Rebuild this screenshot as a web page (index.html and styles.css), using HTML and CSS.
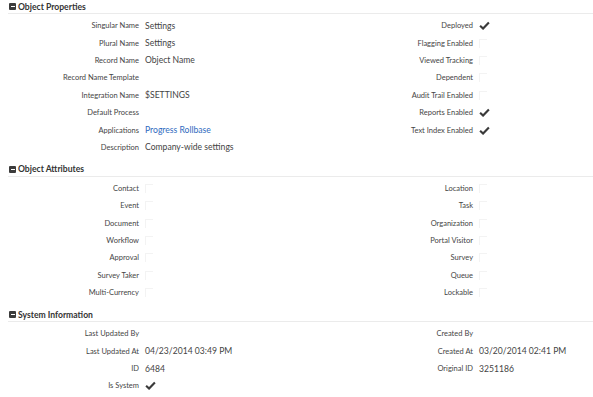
FILE: index.html
```html
<!DOCTYPE html>
<html lang="en">
<head>
    <meta charset="UTF-8">
    <meta name="viewport" content="width=device-width, initial-scale=1.0">
    <title>Object Definition</title>
    <link rel="stylesheet" href="styles.css">
</head>
<body>
    <div class="section">
        <div class="section-head"><span class="toggle"></span>Object Properties</div>
        <div class="fields">
            <div class="label">Singular Name</div><div class="value">Settings</div>
            <div class="label">Deployed</div><div class="value"><svg class="check" viewBox="0 0 10 8"><path d="M1 4.2 L3.7 6.8 L9 1.2"/></svg></div>

            <div class="label">Plural Name</div><div class="value">Settings</div>
            <div class="label">Flagging Enabled</div><div class="value"><span class="box"></span></div>

            <div class="label">Record Name</div><div class="value">Object Name</div>
            <div class="label">Viewed Tracking</div><div class="value"><span class="box"></span></div>

            <div class="label">Record Name Template</div><div class="value"></div>
            <div class="label">Dependent</div><div class="value"><span class="box"></span></div>

            <div class="label">Integration Name</div><div class="value">$SETTINGS</div>
            <div class="label">Audit Trail Enabled</div><div class="value"><span class="box"></span></div>

            <div class="label">Default Process</div><div class="value"></div>
            <div class="label">Reports Enabled</div><div class="value"><svg class="check" viewBox="0 0 10 8"><path d="M1 4.2 L3.7 6.8 L9 1.2"/></svg></div>

            <div class="label">Applications</div><div class="value"><a href="#">Progress Rollbase</a></div>
            <div class="label">Text Index Enabled</div><div class="value"><svg class="check" viewBox="0 0 10 8"><path d="M1 4.2 L3.7 6.8 L9 1.2"/></svg></div>

            <div class="label">Description</div><div class="value">Company-wide settings</div>
            <div class="label"></div><div class="value"></div>
        </div>
    </div>

    <div class="section">
        <div class="section-head"><span class="toggle"></span>Object Attributes</div>
        <div class="fields">
            <div class="label">Contact</div><div class="value"><span class="box"></span></div>
            <div class="label">Location</div><div class="value"><span class="box"></span></div>

            <div class="label">Event</div><div class="value"><span class="box"></span></div>
            <div class="label">Task</div><div class="value"><span class="box"></span></div>

            <div class="label">Document</div><div class="value"><span class="box"></span></div>
            <div class="label">Organization</div><div class="value"><span class="box"></span></div>

            <div class="label">Workflow</div><div class="value"><span class="box"></span></div>
            <div class="label">Portal Visitor</div><div class="value"><span class="box"></span></div>

            <div class="label">Approval</div><div class="value"><span class="box"></span></div>
            <div class="label">Survey</div><div class="value"><span class="box"></span></div>

            <div class="label">Survey Taker</div><div class="value"><span class="box"></span></div>
            <div class="label">Queue</div><div class="value"><span class="box"></span></div>

            <div class="label">Multi-Currency</div><div class="value"><span class="box"></span></div>
            <div class="label">Lockable</div><div class="value"><span class="box"></span></div>
        </div>
    </div>

    <div class="section">
        <div class="section-head"><span class="toggle"></span>System Information</div>
        <div class="fields">
            <div class="label">Last Updated By</div><div class="value"></div>
            <div class="label">Created By</div><div class="value"></div>

            <div class="label">Last Updated At</div><div class="value">04/23/2014 03:49 PM</div>
            <div class="label">Created At</div><div class="value">03/20/2014 02:41 PM</div>

            <div class="label">ID</div><div class="value">6484</div>
            <div class="label">Original ID</div><div class="value">3251186</div>

            <div class="label">Is System</div><div class="value"><svg class="check" viewBox="0 0 10 8"><path d="M1 4.2 L3.7 6.8 L9 1.2"/></svg></div>
            <div class="label"></div><div class="value"></div>
        </div>
    </div>
</body>
</html>
```

FILE: styles.css
```css
body { margin: 0; padding-left: 8px; background: #fff; font-family: Lato, "Open Sans", sans-serif; color: #444; }
.section { margin-bottom: 6.6px; }
.section-head { height: 13px; border-bottom: 1px solid #ebebeb; display: flex; align-items: center; font-size: 8.6px; font-weight: bold; color: #333; }
.toggle { position: relative; width: 7px; height: 7px; margin: 0 2px 0 1px; background: #3c3c3c; border-radius: 1px; }
.toggle::after { content: ""; position: absolute; left: 1.5px; right: 1.5px; top: 3px; height: 1px; background: #fff; }
.fields { display: grid; grid-template-columns: 131px 175px 147px 1fr; grid-auto-rows: 17.4px; column-gap: 6px; padding-top: 3px; align-items: center; }
.label { text-align: right; font-size: 7.5px; color: #454545; }
.value { font-size: 8.6px; color: #444; display: flex; align-items: center; }
.value a { color: #2f6bc0; text-decoration: none; }
.check { width: 11px; height: 9px; fill: none; stroke: #3a3a3a; stroke-width: 1.9; }
.box { width: 7px; height: 8px; border-top: 1px solid #f3f3f3; border-left: 1px solid #f3f3f3; }
```
